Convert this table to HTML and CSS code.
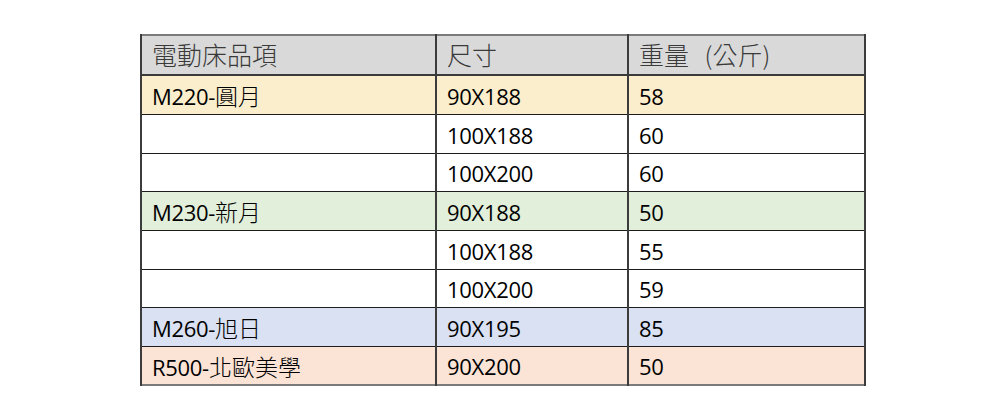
FILE: index.html
```html
<!DOCTYPE html>
<html lang="zh-Hant">
<head>
<meta charset="utf-8">
<title>電動床</title>
<link rel="stylesheet" href="styles.css">
</head>
<body>
<div class="page">
  <table class="spec">
    <colgroup>
      <col class="c1"><col class="c2"><col class="c3">
    </colgroup>
    <thead>
      <tr class="head">
        <th><span class="cj">電動床品項</span></th>
        <th><span class="cj">尺寸</span></th>
        <th><span class="cj wide">重量 (公斤)</span></th>
      </tr>
    </thead>
    <tbody>
      <tr class="r39 yellow"><td>M220-<span class="cj">圓月</span></td><td>90X188</td><td>58</td></tr>
      <tr class="r39"><td></td><td>100X188</td><td>60</td></tr>
      <tr class="r38"><td></td><td>100X200</td><td>60</td></tr>
      <tr class="r39 green"><td>M230-<span class="cj">新月</span></td><td>90X188</td><td>50</td></tr>
      <tr class="r39"><td></td><td>100X188</td><td>55</td></tr>
      <tr class="r38"><td></td><td>100X200</td><td>59</td></tr>
      <tr class="r39 blue"><td>M260-<span class="cj">旭日</span></td><td>90X195</td><td>85</td></tr>
      <tr class="r39 peach"><td>R500-<span class="cj">北歐美學</span></td><td>90X200</td><td>50</td></tr>
    </tbody>
  </table>
</div>
</body>
</html>
```
FILE: styles.css
```css
html, body {
  margin: 0;
  padding: 0;
  background: #ffffff;
}
.page {
  padding: 34px 0 0 140px;
}
.spec {
  border-collapse: collapse;
  table-layout: fixed;
  width: 724px;
  font-family: "Open Sans", "Noto Sans CJK TC", sans-serif;
  font-size: 22px;
  color: #000;
  border: 2px solid #7b7b7b;
}
.c1 { width: 295px; }
.c2 { width: 192px; }
.c3 { width: 237px; }
.spec th,
.spec td {
  text-align: left;
  font-weight: normal;
  padding: 2px 10px 0 10px;
  line-height: 24px;
  vertical-align: middle;
  border-top: 1px solid #1c1c1c;
  border-bottom: 1px solid #1c1c1c;
  border-left: 2px solid #3c3c3c;
  border-right: 2px solid #3c3c3c;
  white-space: nowrap;
}
.spec td {
  letter-spacing: -0.3px;
}
.spec th {
  color: #3a3a3a;
  padding-top: 0;
  border-bottom: 2px solid #3a3a3a;
}
.cj {
  font-family: "Noto Sans CJK TC", sans-serif;
  font-size: 23px;
  font-weight: 300;
  letter-spacing: 0;
}
.spec th .cj {
  font-size: 25px;
}
.spec th .wide {
  word-spacing: 10px;
}
.head { height: 40px; background: #d9d9d9; }
.r39 { height: 39px; }
.r38 { height: 38px; }
.yellow { background: #fbeecd; }
.green { background: #e2efda; }
.blue { background: #d9e1f2; }
.peach { background: #fbe4d6; }
```
